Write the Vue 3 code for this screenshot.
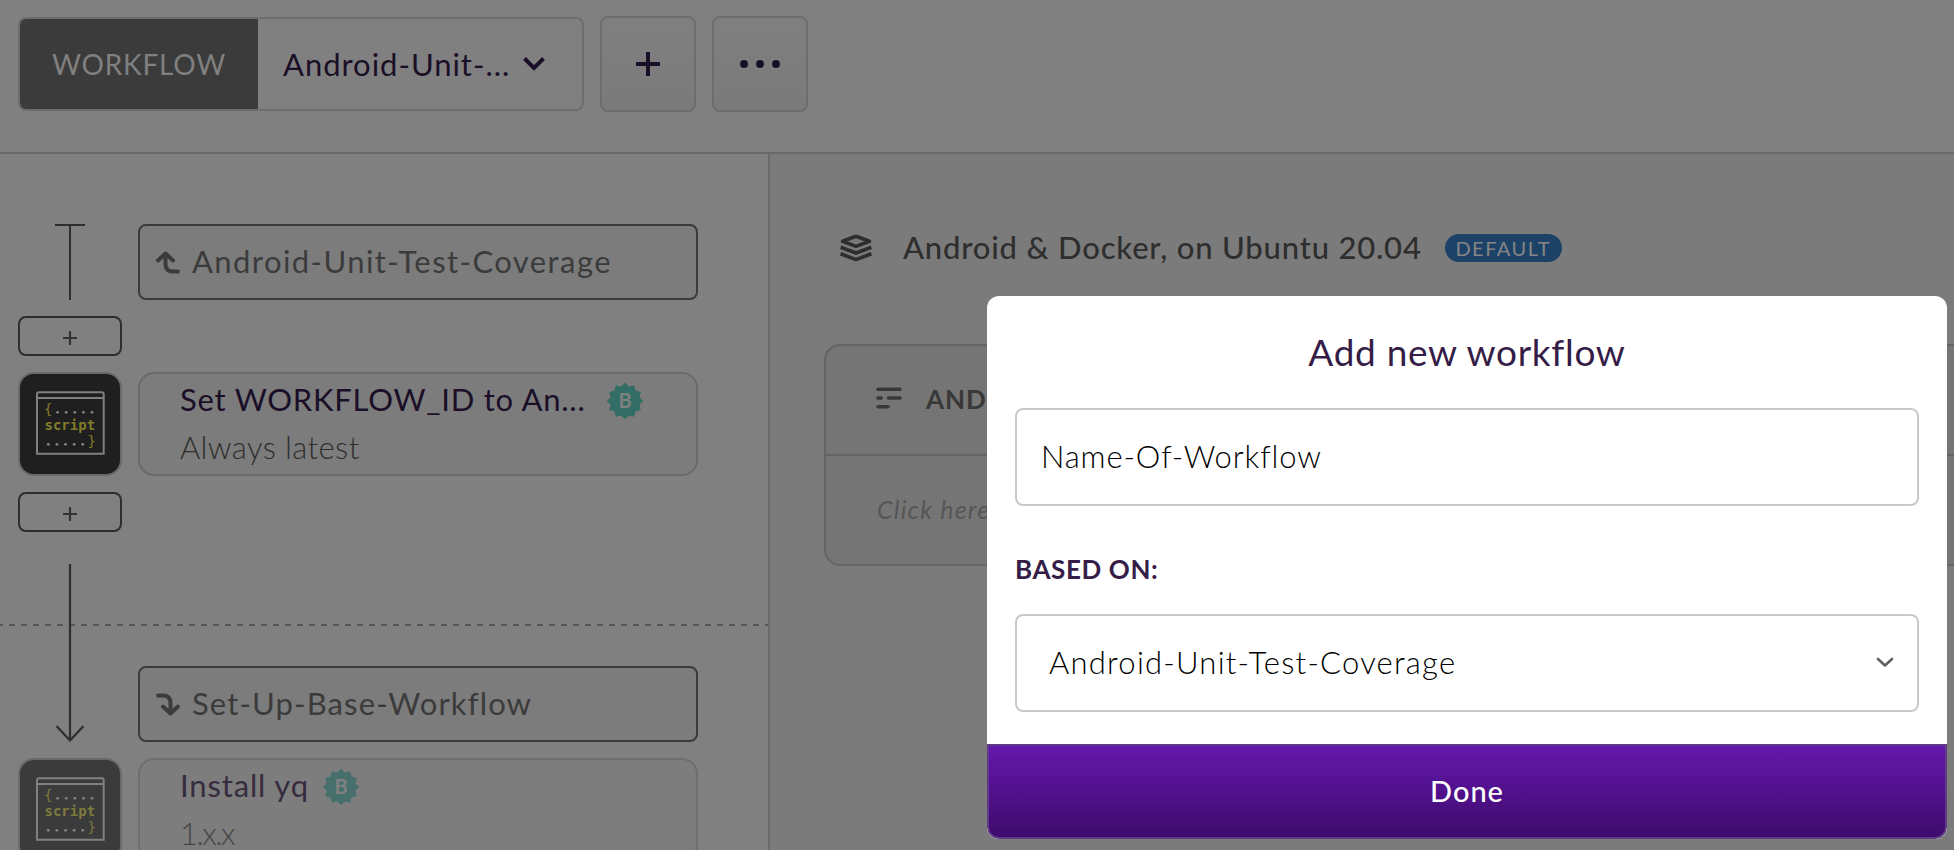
<script setup>
const steps = {
  first: { title: 'Set WORKFLOW_ID to An...', version: 'Always latest' },
  second: { title: 'Install yq', version: '1.x.x' },
}
const badgePoints = Array.from({ length: 24 }, (_, i) => {
  const r = i % 2 ? 14.9 : 18.2
  const a = (i * Math.PI) / 12
  return `${(18 + r * Math.sin(a)).toFixed(2)},${(18 - r * Math.cos(a)).toFixed(2)}`
}).join(' ')
</script>

<template>
  <div class="page">
    <header class="topbar">
      <div class="selector">
        <span class="selector-label"><span class="t-label">WORKFLOW</span></span>
        <span class="selector-value">Android-Unit-...</span>
        <svg class="selector-chevron" width="24" height="18" viewBox="0 0 24 18"><path d="M2.500 3.500 12 13l9.500-9.500" fill="none" stroke="#1a0f26" stroke-width="4" /></svg>
      </div>
      <button class="square">
        <svg width="24" height="24" viewBox="0 0 24 24"><path d="M12 0v24M0 12h24" stroke="#1a0f26" stroke-width="4" /></svg>
      </button>
      <button class="square">
        <svg width="40" height="8" viewBox="0 0 40 8" fill="#1a0f26"><circle cx="4" cy="4" r="4" /><circle cx="20" cy="4" r="4" /><circle cx="36" cy="4" r="4" /></svg>
      </button>
    </header>

    <div class="body">
      <aside class="sidebar">
        <div class="row">
          <svg width="104" height="76" viewBox="0 0 104 76"><path d="M37 1h30M52 1v75" stroke="#2e2e2e" stroke-width="2" /></svg>
          <div class="flow">
            <svg width="24" height="24" viewBox="0 0 24 24" fill="none" stroke="#3b3b3b" stroke-width="4" stroke-linecap="round" stroke-linejoin="round"><path d="M2 10.500 9.500 3.500 17 10.500" /><path d="M9.500 4v10q0 7.500 7.500 7.500H22" /></svg>
            <span class="flow-name a">Android-Unit-Test-Coverage</span>
          </div>
        </div>
        <div class="plus"><svg width="14" height="14" viewBox="0 0 14 14"><path d="M7 0v14M0 7h14" stroke="#333" stroke-width="2.200" /></svg></div>
        <div class="row">
          <div class="tile">
            <svg width="100" height="100" viewBox="0 0 100 100">
              <path d="M17 79.700V20.300q0-2 2-2h62.700q2 0 2 2v59.400zM17 24h66.700" fill="none" stroke="#808080" stroke-width="2" />
              <g class="code"><text x="24" y="40">{</text><text x="24.500" y="56" class="b">script</text><text x="67.500" y="72">}</text></g>
              <g fill="#858585"><circle v-for="i in 5" :key="i" :cx="29 + i * 8.600" cy="38.300" r="1.400" /><circle v-for="i in 5" :key="'b' + i" :cx="19.700 + i * 8.600" cy="70.300" r="1.400" /></g>
            </svg>
          </div>
          <div class="card">
            <div class="card-title"><span class="s1">{{ steps.first.title }}</span>
              <svg class="badge far" width="36" height="36" viewBox="0 0 36 36"><polygon :points="badgePoints" fill="#326d66" /><text x="18" y="25" text-anchor="middle" class="badge-b">B</text></svg>
            </div>
            <div class="card-sub v1">{{ steps.first.version }}</div>
          </div>
        </div>
        <div class="plus"><svg width="14" height="14" viewBox="0 0 14 14"><path d="M7 0v14M0 7h14" stroke="#333" stroke-width="2.200" /></svg></div>
        <div class="row linked">
          <svg class="divider" width="768" height="2" viewBox="0 0 768 2"><path d="M-3 1H768" stroke="#565656" stroke-width="2" stroke-dasharray="6 6" /></svg>
          <svg class="arrow" width="104" height="178" viewBox="0 0 104 178"><path d="M52 0v176M38.500 162 52 176.500 65.500 162" fill="none" stroke="#2e2e2e" stroke-width="2.200" stroke-linejoin="round" /></svg>
          <div class="flow">
            <svg width="24" height="24" viewBox="0 0 24 24" fill="none" stroke="#3b3b3b" stroke-width="4" stroke-linecap="round" stroke-linejoin="round"><path d="M7 14.500 14.500 21.500 22 14.500" /><path d="M14.500 21V11q0-7.500-7.500-7.500H2" /></svg>
            <span class="flow-name s">Set-Up-Base-Workflow</span>
          </div>
        </div>
        <div class="row">
          <div class="tile faded">
            <svg width="100" height="100" viewBox="0 0 100 100">
              <path d="M17 79.700V20.300q0-2 2-2h62.700q2 0 2 2v59.400zM17 24h66.700" fill="none" stroke="#808080" stroke-width="2" />
              <g class="code"><text x="24" y="40">{</text><text x="24.500" y="56" class="b">script</text><text x="67.500" y="72">}</text></g>
              <g fill="#858585"><circle v-for="i in 5" :key="i" :cx="29 + i * 8.600" cy="38.300" r="1.400" /><circle v-for="i in 5" :key="'b' + i" :cx="19.700 + i * 8.600" cy="70.300" r="1.400" /></g>
            </svg>
          </div>
          <div class="card pale">
            <div class="card-title"><span class="s2">{{ steps.second.title }}</span>
              <svg class="badge near" width="36" height="36" viewBox="0 0 36 36"><polygon :points="badgePoints" fill="#47706c" /><text x="18" y="25" text-anchor="middle" class="badge-b">B</text></svg>
            </div>
            <div class="card-sub v2">{{ steps.second.version }}</div>
          </div>
        </div>
      </aside>

      <main class="main">
        <div class="stack">
          <svg width="32" height="28" viewBox="0 0 32 28" fill="none" stroke="#2e2e2e" stroke-width="3.600" stroke-linejoin="round"><path d="M16 2.200 29.500 7.300 16 12.400 2.500 7.300z" /><path d="M.6 13.200 16 19l15.400-5.800M.6 19.800 16 25.600l15.400-5.800" /></svg>
          <span class="stack-name">Android &amp; Docker, on Ubuntu 20.04</span>
          <span class="pill"><span>DEFAULT</span></span>
        </div>
        <section class="panel">
          <div class="panel-head">
            <svg width="26" height="22" viewBox="0 0 26 22" stroke="#383838" stroke-width="3.600" stroke-linecap="round"><path d="M2 2.300h22M2 11h3.200M12.500 11H24M2 19.700h10" /></svg>
            <span>AND</span>
          </div>
          <div class="panel-body">Click here</div>
        </section>
      </main>
    </div>

    <div class="modal">
      <h2>Add new workflow</h2>
      <div class="field"><span class="name">Name-Of-Workflow</span></div>
      <div class="based">BASED ON:</div>
      <div class="field select">
        <span class="base">Android-Unit-Test-Coverage</span>
        <svg width="18" height="12" viewBox="0 0 18 12"><path d="M2 2 9 8.500 16 2" fill="none" stroke="#606060" stroke-width="2.600" stroke-linecap="round" stroke-linejoin="round" /></svg>
      </div>
      <button class="done">Done</button>
    </div>
  </div>
</template>

<style>
body { margin: 0; overflow: hidden; }
</style>
<style scoped>
* { box-sizing: border-box; }
svg { display: block; flex: none; overflow: visible; }
.page { position: relative; display: flex; flex-direction: column; width: 1954px; height: 850px; overflow: hidden; background: #808080; color: #1a0f26; font-family: Lato, "Liberation Sans", sans-serif; font-size: 31px; white-space: nowrap; font-kerning: normal; }
.topbar { flex: none; height: 154px; border-bottom: 2px solid #6a6a6a; display: flex; align-items: flex-start; gap: 16px; padding: 16px 18px; }
.selector { display: flex; align-items: center; width: 566px; height: 94px; margin-top: 1px; border: 2px solid #6d6d6d; border-radius: 8px; overflow: hidden; }
.selector-label { display: flex; align-items: center; width: 238px; height: 90px; padding-left: 32px; background: #3b3b3b; color: #808080; font-size: 28px; }
.t-label { letter-spacing: .8px; }
.selector-value { width: 239px; padding: 0 0 1px 25px; letter-spacing: .97px; }
.selector-chevron { margin-left: 25px; }
.square { display: flex; align-items: center; justify-content: center; width: 96px; height: 96px; padding: 0; border: 2px solid #6d6d6d; border-radius: 8px; background: linear-gradient(#808080, #7a7a7a); }
.body { display: flex; flex: 1; min-height: 0; }
.sidebar { flex: none; display: flex; flex-direction: column; gap: 16px; width: 770px; padding: 70px 0 0 18px; border-right: 2px solid #6a6a6a; overflow: hidden; }
.row { display: flex; flex: none; gap: 16px; }
.linked { position: relative; margin-top: 16px; align-items: flex-end; }
.divider { position: absolute; left: -18px; top: 60px; }
.arrow { position: relative; }
.flow { display: flex; align-items: center; gap: 12px; width: 560px; height: 76px; padding: 0 16px 1px; border: 2px solid #3b3b3b; border-radius: 8px; background: #7c7c7c; color: #3b3b3b; }
.flow-name { padding-bottom: 1px; }
.flow-name.a { letter-spacing: 1.42px; }
.flow-name.s { letter-spacing: 1.12px; }
.plus { flex: none; display: flex; align-items: center; justify-content: center; width: 104px; height: 40px; padding-top: 3px; border: 2px solid #2e2e2e; border-radius: 8px; }
.tile { flex: none; width: 104px; height: 104px; border: 2px solid #6a6a6a; border-radius: 16px; background: #1f1f1f; }
.tile.faded { background: #3b3b3b; }
.code { font: 14px "DejaVu Sans Mono", monospace; fill: #817c2a; }
.code .b { font-weight: bold; }
.faded .code { fill: #7d7a3b; }
.card { width: 560px; height: 104px; padding: 1px 0 0 40px; border: 2px solid #6a6a6a; border-radius: 16px; background: #7c7c7c; }
.card.pale { border-color: #6e6e6e; background: #7d7d7d; color: #362c3e; }
.card-title { display: flex; align-items: center; height: 48px; }
.badge.far { margin-left: 21px; margin-top: 4px; }
.badge.near { margin-left: 14px; margin-top: 4px; }
.badge-b { font: bold 20px Lato, sans-serif; fill: #808080; }
.card-sub { height: 48px; line-height: 48px; font-weight: 300; color: #2e2e2e; }
.pale .card-sub { color: #454545; }
.s1 { letter-spacing: .76px; }
.s2 { letter-spacing: .85px; }
.v1 { letter-spacing: .4px; }
.v2 { letter-spacing: -1.500px; }
.main { flex: 1; min-width: 0; padding: 60px 0 0 54px; background: #7b7b7b; overflow: hidden; }
.stack { display: flex; align-items: center; height: 68px; padding-left: 16px; color: #2e2e2e; }
.stack-name { margin-left: 31px; padding-bottom: 2px; font-weight: 500; letter-spacing: .8px; }
.pill { display: flex; align-items: center; justify-content: center; width: 117px; height: 28px; margin-left: 23px; border-radius: 14px; background: #1d4268; color: #858585; font-size: 20px; letter-spacing: 1.500px; }
.panel { width: 1200px; height: 222px; margin-top: 62px; border: 2px solid #646464; border-radius: 16px; background: #757575; overflow: hidden; }
.panel-head { display: flex; align-items: center; gap: 24px; height: 110px; padding: 0 0 3px 50px; border-bottom: 2px solid #646464; color: #383838; font-size: 26px; font-weight: 700; letter-spacing: .9px; }
.panel-head svg { margin-bottom: 2px; }
.panel-body { height: 108px; line-height: 107px; padding-left: 51px; color: #565656; font-size: 25px; font-style: italic; letter-spacing: 1.200px; }
.modal { position: absolute; left: 987px; top: 296px; width: 960px; height: 543px; display: flex; flex-direction: column; padding: 0; border-radius: 12px; overflow: hidden; background: #fff; color: #351d48; }
h2 { margin: 32px 0 30px; height: 50px; line-height: 48px; font-size: 37px; font-weight: 400; text-align: center; letter-spacing: .7px; }
.field { flex: none; display: flex; align-items: center; justify-content: space-between; height: 98px; margin: 0 28px; padding: 0 24px 2px; border: 2px solid #c9c9c9; border-radius: 8px; color: #000; font-weight: 300; }
.name { letter-spacing: .87px; }
.base { padding-left: 8px; letter-spacing: 1.230px; }
.select svg { margin: 2px -1px 0 0; }
.based { height: 108px; padding: 3px 0 0 28px; line-height: 120px; font-size: 26px; font-weight: 700; letter-spacing: .6px; }
.done { margin-top: 32px; height: 95px; flex: none; padding: 0 0 2px; border: 2px solid #603a84; border-radius: 0 0 12px 12px; background: linear-gradient(#6518ac, #3d0a6c); color: #fff; font: 500 29px Lato, sans-serif; letter-spacing: 1px; }
</style>
